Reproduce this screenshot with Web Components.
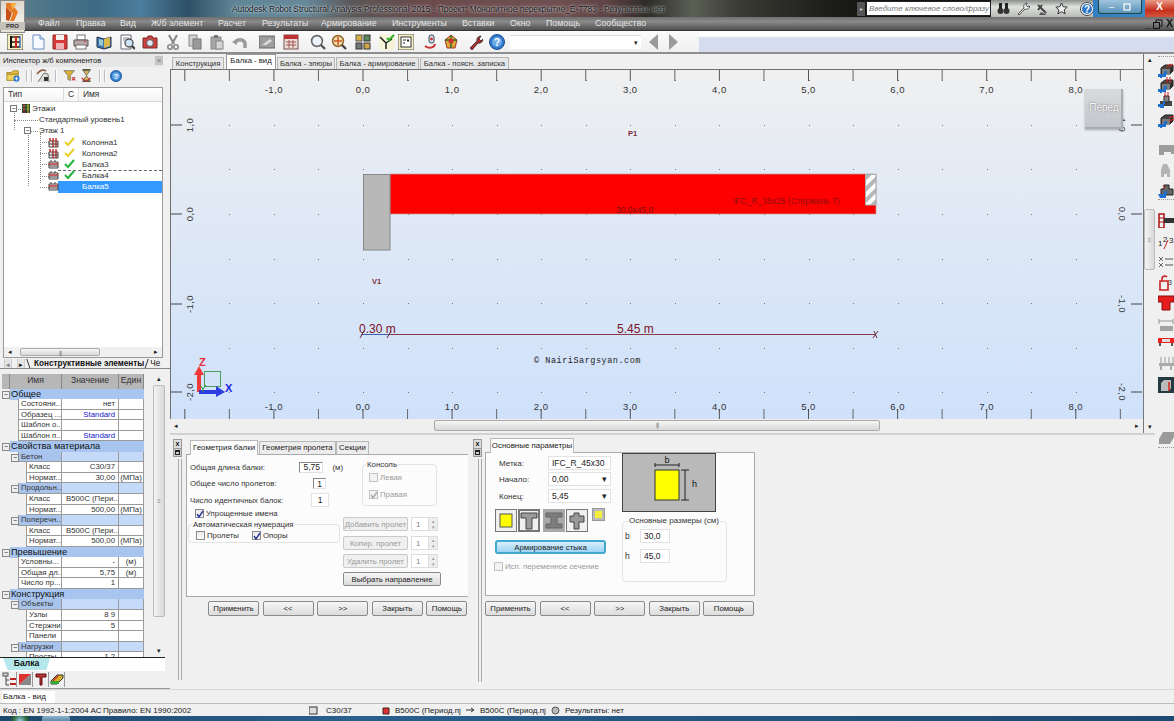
<!DOCTYPE html>
<html lang="ru"><head><meta charset="utf-8"><title>Robot</title>
<style>
html,body{margin:0;padding:0;background:#f0f0f0;overflow:hidden}
body{font:8px "Liberation Sans",Arial,sans-serif;color:#222;width:1174px;height:721px}
</style></head><body>
<rb-app></rb-app>
<script>
const S=(body,w=16,h=16)=>`<svg width="${w}" height="${h}" viewBox="0 0 ${w} ${h}" xmlns="http://www.w3.org/2000/svg">${body}</svg>`;
function def(name,css,html){
  customElements.define(name,class extends HTMLElement{
    constructor(){super();const r=this.attachShadow({mode:'open'});r.innerHTML=`<style>${css}</style>`+(typeof html==='function'?html(this):html);}
  });
}
const I={
 tree:`<rect x="0" y="0" width="16" height="16" fill="#f5eec0" stroke="#444"/><path d="M3 3h10M3 8h10M3 13h10" stroke="#222" stroke-width="1.6"/><path d="M4 2v12" stroke="#111" stroke-width="2"/><path d="M9 2v12" stroke="#c22" stroke-width="2"/><path d="M13 2v12" stroke="#36c" stroke-width="1.4"/>`,
 doc:`<path d="M3 1h7l4 4v10H3z" fill="#f6f9ff" stroke="#6c8fc0"/><path d="M10 1v4h4" fill="#cfe0f5" stroke="#6c8fc0"/>`,
 save:`<path d="M1 1h14v14H1z" fill="#d63a3a" stroke="#8d2a2a"/><rect x="4" y="1" width="8" height="5" fill="#f2f2f2"/><rect x="4" y="9" width="8" height="6" fill="#ecb4b4"/>`,
 print:`<rect x="4" y="1" width="8" height="5" fill="#fff" stroke="#777"/><path d="M1 6h14v6H1z" fill="#b8a6a6" stroke="#555"/><rect x="3" y="11" width="10" height="4" fill="#fff" stroke="#777"/><rect x="11" y="7" width="2" height="1" fill="#d33"/>`,
 book:`<path d="M1 3l7 2 7-2v10l-7 2-7-2z" fill="#3f74b8" stroke="#234"/><path d="M8 5l6-2v9l-6 2z" fill="#d9b84c"/><path d="M3 5l4 1v6l-4-1z" fill="#9cc"/>`,
 prev:`<path d="M2 1h10v14H2z" fill="#fff" stroke="#667"/><circle cx="10" cy="9" r="4" fill="#cfe3f7" stroke="#555" stroke-width="1.4"/><path d="M13 12l3 3" stroke="#333" stroke-width="2"/><path d="M4 4h6M4 6h3" stroke="#889"/>`,
 cam:`<path d="M1 4h4l1-2h4l1 2h4v10H1z" fill="#c9403f" stroke="#7a2a2a"/><circle cx="8" cy="9" r="3.4" fill="#dfe8f2" stroke="#555"/>`,
 cut:`<path d="M4 1l5 9M12 1L7 10" stroke="#8a8a8a" stroke-width="2.2"/><circle cx="5" cy="13" r="2.2" fill="none" stroke="#888" stroke-width="1.6"/><circle cx="11" cy="13" r="2.2" fill="none" stroke="#888" stroke-width="1.6"/>`,
 copy:`<rect x="2" y="1" width="8" height="11" fill="#cfcfcf" stroke="#8a8a8a"/><rect x="6" y="5" width="8" height="10" fill="#9a9a9a" stroke="#777"/>`,
 paste:`<rect x="2" y="3" width="10" height="12" fill="#a6a6a6" stroke="#8a8a8a"/><rect x="5" y="1" width="4" height="3" fill="#777"/><rect x="7" y="7" width="7" height="8" fill="#d4d4d4" stroke="#888"/>`,
 undo:`<path d="M3 9a5.5 5.5 0 0 1 10 0v5" fill="none" stroke="#9b9b9b" stroke-width="3.4"/><path d="M0 8l5-3v6z" fill="#9b9b9b"/>`,
 grey:`<rect x="0" y="2" width="16" height="12" fill="#9d9d9d" stroke="#666"/><path d="M3 11l8-6 2 2-6 4z" fill="#ddd"/>`,
 calc:`<rect x="1" y="1" width="14" height="14" fill="#e8e0d8" stroke="#7a4a4a"/><rect x="1" y="1" width="14" height="4" fill="#b33"/><path d="M3 8h10M3 11h10M6 6v8M10 6v8" stroke="#a55"/>`,
 mag:`<circle cx="7" cy="7" r="5.4" fill="#eef4fb" stroke="#666" stroke-width="1.6"/><path d="M11 11l4 4" stroke="#555" stroke-width="2.4"/>`,
 zoomo:`<circle cx="7" cy="7" r="5.4" fill="#f5e1b4" stroke="#9a6a2a" stroke-width="1.6"/><path d="M7 3v8M3 7h8" stroke="#d0551e" stroke-width="1.5"/><path d="M11 11l4 4" stroke="#444" stroke-width="2.4"/>`,
 multi:`<rect x="1" y="1" width="6" height="6" fill="#d8b040" stroke="#555"/><rect x="9" y="1" width="6" height="6" fill="#5a8a5a" stroke="#333"/><rect x="1" y="9" width="6" height="6" fill="#777" stroke="#333"/><rect x="9" y="9" width="6" height="6" fill="#d3a54a" stroke="#333"/>`,
 ygreen:`<rect x="0" y="0" width="16" height="16" fill="#f6f3d8"/><path d="M1 3l6 6v6M7 9l6-4" fill="none" stroke="#222" stroke-width="1.5"/><path d="M8 4l2 2 5-5" fill="none" stroke="#2bb32b" stroke-width="2"/>`,
 frame:`<rect x="0" y="0" width="16" height="16" fill="#f3eec4" stroke="#555"/><rect x="3" y="3" width="10" height="10" fill="#fff" stroke="#333"/><path d="M5 6h3M5 9h2" stroke="#222"/><path d="M10 5v3M9 6.5h2" stroke="#222"/>`,
 link:`<path d="M3 12c4 3 9 2 10-2" fill="none" stroke="#c33" stroke-width="2"/><rect x="7" y="1" width="5" height="8" rx="2" fill="#d8e4ef" stroke="#345"/><circle cx="9.5" cy="5" r="1.4" fill="#c33"/>`,
 color:`<path d="M8 1l6 5-2 8H4L2 6z" fill="#d9a932" stroke="#a33"/><path d="M8 1v13M2 6h12" stroke="#2a6a2a" stroke-width="1.4"/><circle cx="8" cy="7" r="2.5" fill="#c33"/>`,
 wrench:`<path d="M3 14l7-7a4 4 0 0 1 4-5l-2 3 2 2 2-2a4 4 0 0 1-5 4l-6 7z" fill="#b33030" stroke="#222" stroke-width=".8"/>`,
 help:`<circle cx="8" cy="8" r="7.5" fill="#2f78c8" stroke="#1d4f92"/><circle cx="8" cy="8" r="5" fill="#6aaae8"/><text x="8" y="11.5" text-anchor="middle" font-family="Liberation Sans" font-weight="bold" font-size="10" fill="#fff">?</text>`,
 folder:`<path d="M1 4h5l2-2h6v4H1z" fill="#e3c043" stroke="#a8862a"/><path d="M1 6h13v7H1z" fill="#f0d25a" stroke="#a8862a"/><circle cx="12" cy="11" r="3.5" fill="#2f7ad0"/><path d="M12 9v4M10 11h4" stroke="#fff"/>`,
 tool:`<path d="M3 14l6-9 4 1 1 8" fill="#ddd" stroke="#776"/><path d="M2 6c3-4 6-5 9-3" fill="none" stroke="#8a5a40" stroke-width="1.6"/><path d="M9 9h4v4H9z" fill="#333"/>`,
 funnel:`<path d="M1 2h13l-5 6v6l-3-1V8z" fill="#d9b030" stroke="#776"/><path d="M11 10l4 4M15 10l-4 4" stroke="#c33" stroke-width="1.5"/>`,
 hour:`<path d="M3 1h10M3 15h10" stroke="#554" stroke-width="2"/><path d="M4 2l4 6 4-6zM4 14l4-6 4 6z" fill="#d7b25a" stroke="#665"/><path d="M2 11l5 4M8 15l5-4" stroke="#b33" stroke-width="1.5"/>`,
};
const sized=(n,z)=>S(I[n],z,z).replace(`viewBox="0 0 ${z} ${z}"`,'viewBox="0 0 16 16"');
const cube=(extra)=>S(`<path d="M3 6l4-3h8v6l-3 3H3z" fill="#444" stroke="#222"/><path d="M4 7h8v5H4z" fill="#7c7c7c"/><path d="M12 7l3-3v5l-3 3z" fill="#2d2d2d"/>${extra}<path d="M0 12h6v-3h3v3h-1v3H4v1H2v-1H0z" fill="#1f6fd0"/>`,16,16);

def('rb-logo',`:host{position:absolute;left:0;top:0;width:25px;height:33px;background:linear-gradient(#dbd6cc,#f2efe8 65%,#e2dfd6);box-shadow:inset 0 0 0 1px #8a8a8a;z-index:5;display:block}
 svg{display:block;margin:3px 0 0 4px} b{display:block;font:bold 6px "Liberation Sans";text-align:center;color:#333;background:#c4c1b8;height:8px;line-height:8px;margin-top:1px}`,
 S(`<path d="M2 0h5l7 9-4 9H6l3-8-7-6z" fill="#e77a22"/><path d="M7 0h6L8 7z" fill="#f6b04a"/><path d="M2 4l6 6-3 8-3-1z" fill="#c84e15"/>`,16,18)+`<b>PRO</b>`);

def('rb-titlebar',`:host{display:flex;height:17px;align-items:center;background:linear-gradient(90deg,#5d7f8c 0,#3d6a84 8%,#4b7d9c 12%,#2e5066 16%,#5f8596 20%,#66899a 26%,#5a5656 30%,#6a4a4b 36%,#6f5050 48%,#5d4142 52%,#2d2c27 55%,#5b5f54 59%,#3a3b34 63%,#1f1f1c 70%,#141413 74%);position:relative}
 .t{margin-left:232px;font-size:8.3px;color:#10151a;text-shadow:0 0 2px rgba(255,255,255,.8),0 0 4px rgba(255,255,255,.6);white-space:nowrap;width:600px}
 .s{margin-left:auto;display:flex;align-items:center;height:17px}
 .arrow{width:8px;height:14px;background:#555;color:#ccc;font-size:6px;line-height:14px;margin-right:1px;text-align:center}
 .in{width:125px;height:15px;background:#fff;border:1px solid #222;box-sizing:border-box;font:italic 8px "Liberation Sans";color:#777;line-height:13px;padding-left:2px;white-space:nowrap;overflow:hidden}
 .ic{display:flex;align-items:center;width:102px;height:17px;background:linear-gradient(#8b8f8a,#dfe2df 40%,#b9bbb7);padding-left:6px;box-sizing:border-box;gap:6px}
 .ic svg{flex:none}
 .w{display:flex;width:81px;height:17px;background:linear-gradient(90deg,#2f7fc1,#3f8fc8);box-sizing:border-box;position:relative;align-items:center}
 .m{height:14px;display:flex;align-items:center;justify-content:center;gap:9px;background:linear-gradient(#9fc4dc,#5b93b8);border:1px solid #244;border-top:0;border-radius:0 0 3px 3px;margin-left:5px;box-sizing:border-box;width:44px;color:#fff;font-size:9px;align-self:flex-start}
 .x{flex:1;align-self:stretch;margin-left:3px;background:linear-gradient(#e99a86,#c42f1c 60%,#d5543a);color:#fff;text-align:center;font:bold 10px/14px "Liberation Sans"}`,
 `<span class="t">Autodesk Robot Structural Analysis Professional 2015 - Проект: Монолитное перекрытие_E-7783 - Результаты: нет</span>
 <div class="s"><span class="arrow">▸</span><span class="in">Введите ключевое слово/фразу</span>
 <div class="ic">${S('<circle cx="3.5" cy="9" r="3" fill="#333"/><circle cx="9.5" cy="9" r="3" fill="#333"/><rect x="2" y="1" width="3" height="6" fill="#222"/><rect x="8" y="1" width="3" height="6" fill="#222"/>',13,13)}${S('<path d="M2 12l6-6a3.5 3.5 0 0 1 3-5l-1 2 2 2 2-1a3.5 3.5 0 0 1-5 3l-6 6z" fill="#eee" stroke="#333" stroke-width=".8"/>',14,13)}${S('<path d="M2 3l8 8M2 8l4-5" stroke="#444" stroke-width="2"/><path d="M5 10l6 3H3z" fill="#555"/>',13,13)}${S('<path d="M6.5 1l1.7 3.7 4 .4-3 2.7.9 4-3.6-2.1-3.6 2.1.9-4-3-2.7 4-.4z" fill="#eee" stroke="#333"/>',13,13)}<span style="width:9px"></span>${S('<circle cx="7" cy="7" r="6.5" fill="#fff" stroke="#444"/><circle cx="7" cy="7" r="5" fill="#2f78c8"/><text x="7" y="10.5" text-anchor="middle" font-family="Liberation Sans" font-weight="bold" font-size="10" fill="#fff">?</text>',14,14)}<span style="font-size:7px;color:#333;margin-left:-2px">▾</span></div>
 <div class="w"><div class="m"><span>–</span>${S('<rect x="1" y="1" width="6" height="6" fill="none" stroke="#fff" stroke-width="1.2"/>',8,8)}</div><div class="x">X</div></div></div>`);

def('rb-menubar',`:host{display:block;height:14px;background:linear-gradient(#6f6f6f,#8a8a8a 35%,#4f4f4f);border-bottom:1px solid #333;box-sizing:border-box;font-size:8.8px;line-height:13px;color:#e6e6e6;position:relative;white-space:nowrap}
 .m{position:absolute;top:0} .r{position:absolute;right:1px;top:0;display:flex;align-items:center;gap:3px;font:bold 10px/13px "Liberation Sans";color:#111;height:13px}`,
 ()=>{const m=[['Файл',38],['Правка',76],['Вид',120],['Ж/б элемент',151],['Расчет',218],['Результаты',262],['Армирование',321],['Инструменты',392],['Вставки',462],['Окно',510],['Помощь',546],['Сообщество',595]];
  return m.map(([t,x])=>`<span class="m" style="left:${x}px">${t}</span>`).join('')+`<div class="r"><span>_</span>${S('<rect x="0.5" y="3.5" width="6" height="6" fill="none" stroke="#111"/><path d="M3 3V1h6v6H7" fill="none" stroke="#111"/>',10,10)}<span>X</span></div>`});

def('rb-toolbar',`:host{display:flex;height:23px;align-items:center;background:linear-gradient(#fbfbfb,#efefef);border-bottom:2px solid #8e8e8e;box-sizing:border-box;position:relative}
 .ic{display:flex;align-items:center;flex:none;margin-left:7px}
 .ic span{display:block;width:16px;height:16px;flex:none} svg{display:block}
 .combo{margin-left:5px;width:131px;height:14px;background:#fff;border-top:1px solid #ddd;position:relative;flex:none;box-sizing:border-box;font-size:7px;text-align:right;padding-right:3px;line-height:14px}
 .n{flex:none;margin-left:8px;display:flex;gap:11px;align-items:center;width:40px}
 .fill{flex:1;align-self:stretch;margin:1px 0 0 10px;background:linear-gradient(#fff 0,#fff 4px,#d5dcee 6px)}`,
 ()=>{const names=['tree','doc','save','print','book','prev','cam','cut','copy','paste','undo','grey','calc','mag','zoomo','multi','ygreen','frame','link','color','wrench','help'];
  const xs=[15,38,60,81,104,127,150,173,195,217,240,267,291,318,339,363,387,406,430,451,475,497];
  return `<div class="ic">`+names.map((n,i)=>{const mx=i?xs[i]-xs[i-1]-16:0;return `<span style="margin-left:${mx}px">${S(I[n])}</span>`}).join('')+`</div><div class="combo">▾</div><div class="n">${S('<path d="M9 0v16L0 8z" fill="#9a9a9a"/>',9,16)}${S('<path d="M0 0v16l9-8z" fill="#9a9a9a"/>',9,16)}</div><div class="fill"></div>`});

def('rb-vbar',`:host{display:flex;flex-direction:column;background:#f0f0f0;box-sizing:border-box;width:var(--w,12px)}
 .a{height:12px;font-size:7px;line-height:12px;text-align:center;color:#222;flex:none} .t{background:linear-gradient(90deg,#f4f4f4,#d9d9d9);border:1px solid #bbb;border-radius:2px;box-sizing:border-box;flex:none;text-align:center;color:#888;font-size:6px;display:flex;align-items:center;justify-content:center} .s{flex:none}`,
 el=>`<div class="a">▴</div><div class="s" style="height:${el.getAttribute('before')||0}px"></div><div class="t" style="height:${el.getAttribute('thumb')||40}px">≡</div><div style="flex:1"></div><div class="a">▾</div>`);
def('rb-hbar',`:host{display:flex;align-items:center;background:#f0f0f0;height:var(--h,12px);flex:none}
 .a{width:12px;font-size:7px;text-align:center;flex:none;color:#222} .t{height:calc(100% - 2px);background:linear-gradient(#f6f6f6,#d8d8d8);border:1px solid #aaa;border-radius:2px;box-sizing:border-box;text-align:center;color:#777;font-size:7px;line-height:9px;flex:none} `,
 el=>`<div class="a">◂</div><div style="width:${el.getAttribute('before')||0}px;flex:none"></div><div class="t" style="width:${el.getAttribute('thumb')||40}px">⦀</div><div style="flex:1"></div><div class="a">▸</div>`);

def('rb-tree',`:host{display:block;background:#fff;margin:3px 7px 0 3px;height:260px;border:1px solid #9a9a9a;border-bottom:0;box-sizing:border-box;overflow:hidden;position:relative;font-size:8px;letter-spacing:-.05px}
 .h{display:flex;height:13px;border-bottom:1px solid #d5d5d5;background:linear-gradient(#fff,#f4f4f4);line-height:12px;margin-bottom:1px;color:#333;font-size:8.5px}
 .h span{border-right:1px solid #ddd;box-sizing:border-box;padding-left:4px;flex:none}
 .r{height:11.2px;display:flex;align-items:center;position:relative;white-space:nowrap;line-height:11px;color:#333}
 .b{position:absolute;width:7px;height:7px;border:1px solid #777;background:#fff;box-sizing:border-box;font-size:7px;line-height:5px;text-align:center;top:2px;color:#222}
 .d{position:absolute;height:0;top:5.5px;border-top:1px dotted #888}
 .v{position:absolute;width:0;border-left:1px dotted #888}
 .l{position:absolute} .ic{position:absolute;top:0}
 .sel{position:absolute;left:54px;right:0;top:0;bottom:0;background:#3399ff}
 .foc{position:absolute;left:54px;right:0;top:0;bottom:0;border-top:1px dashed #666;box-sizing:border-box}`,
 ()=>{
  const redI=S('<path d="M1 4h9v6H1z" fill="#e8e8e8" stroke="#444"/><path d="M5 1v9M8 1v9M2 4V1" stroke="#b22" stroke-width="1.4"/><path d="M1 7h9" stroke="#444"/>',11,11);
  const beamI=S('<path d="M1 3h9v6H1z" fill="#eee" stroke="#444"/><path d="M1 5h9" stroke="#b22" stroke-width="1.4"/><path d="M3 3V1M7 3V1" stroke="#444"/><path d="M1 7h9" stroke="#444"/>',11,11);
  const ck=c=>S(`<path d="M1 5l3 3 6-7" fill="none" stroke="${c}" stroke-width="2"/>`,11,10);
  const rows=[
   `<span class="d" style="left:9px;width:10px"></span><span class="b" style="left:6px">−</span><span class="ic" style="left:17px">${S('<rect x="1" y="1" width="8" height="9" fill="#333"/><path d="M1 3h8M1 6h8" stroke="#3a3"/><path d="M3 1v9" stroke="#c33"/><path d="M7 1v9" stroke="#dc3"/>',10,11)}</span><span class="l" style="left:28px">Этажи</span>`,
   `<span class="d" style="left:10px;width:24px"></span><span class="l" style="left:35px">Стандартный уровень1</span>`,
   `<span class="d" style="left:24px;width:10px"></span><span class="b" style="left:20px">−</span><span class="l" style="left:35px">Этаж 1</span>`,
   ...[['Колонна1',redI,'#e6cf2a'],['Колонна2',redI,'#e6cf2a'],['Балка3',beamI,'#22b53a'],['Балка4',beamI,'#22b53a'],['Балка5',beamI,null]].map(([t,ic,c],i)=>
    `${i==3?'<span class="foc"></span>':''}${i==4?'<span class="sel"></span>':''}<span class="d" style="left:36px;width:9px"></span><span class="ic" style="left:44px">${ic}</span>${c?`<span class="ic" style="left:60px">${ck(c)}</span>`:''}<span class="l" style="left:78px;${i==4?'color:#fff':''}">${t}</span>`)
  ];
  return `<div class="h"><span style="width:60px">Тип</span><span style="width:15px">С</span><span style="flex:1;border:0">Имя</span></div><div style="position:relative"><span class="v" style="left:10px;top:5px;height:22px"></span><span class="v" style="left:24px;top:27px;height:56px"></span><span class="v" style="left:36px;top:30px;height:50px"></span>`+rows.map(r=>`<div class="r">${r}</div>`).join('')+`</div>`;
 });

def('rb-sheet-tabs',`:host{display:flex;height:15px;align-items:center;margin-top:1px;padding-left:4px;background:#f0f0f0;overflow:hidden;position:relative;border-bottom:1px solid #888;box-sizing:border-box;white-space:nowrap}
 .b{width:8px;height:12px;font-size:7px;line-height:12px;text-align:center;background:#e3e3e3;border:1px solid #ccc;box-sizing:border-box;margin-right:5px;flex:none;color:#777}
 .t{font:bold 8.2px "Liberation Sans";margin-left:3px;flex:none;color:#111} svg{flex:none;display:block}`,
 `<span class="b">◂</span><span class="b" style="color:#111;margin-right:1px">▸</span>${S('<path d="M0 0l5 14" stroke="#333" fill="none"/>',5,14)}<span class="t">Конструктивные элементы</span>${S('<path d="M5 0L0 14" stroke="#333" fill="none"/>',5,14)}<span class="t" style="margin-left:1px;font-weight:normal">Че</span>`);

def('rb-props',`:host{display:flex;height:284px;flex:none;overflow:hidden;margin-top:4px;background:#f0f0f0;padding-left:2px;box-sizing:border-box}
 .g{width:142px;flex:none;overflow:hidden;height:284px}
 .hd{display:grid;grid-template-columns:8px 52px 57px 25px;height:14.5px;line-height:13px;text-align:center;font-size:8.6px;color:#333;margin-top:1px}
 .hd span{background:#b7b7b7;border-right:1px solid #888;box-sizing:border-box;overflow:hidden}
 .rw{display:grid;grid-template-columns:8px 52px 57px 25px;height:10.55px;position:relative;line-height:10px;font-size:7.8px;color:#333;white-space:nowrap}
 .rw>span{box-sizing:border-box;border-bottom:1px solid #9b9b9b;border-right:1px solid #9b9b9b;background:#fff;overflow:hidden;padding:0 1px}
 .tg{background:transparent!important;border:0!important;padding:0!important;position:relative;overflow:visible!important}
 .tg i{position:absolute;left:0;top:2px;width:6px;height:6px;border:1px solid #888;background:#eee;font:normal 7px/5px "Liberation Sans";text-align:center;color:#222}
 .rw .num{text-align:right;padding-right:3px} .rw .blue{color:#1414c8}
 .rw.g0>span:not(.tg){background:#a7c5ef;border-color:#a7c5ef;color:#111;font-size:9.2px;overflow:visible}
 .rw.g0 .n{grid-column:2 / 5}
 .rw.s>span:not(.tg){background:#c5d9f8}
 .rw.s>.n{background:#a9c4ec!important}
 .rw .n{padding:0 0 0 1px}
 .rw.i1 .n,.rw.s .n{margin-left:8px;border-left:1px solid #9b9b9b;padding:0 0 0 2px}
 .rw.i2 .n{margin-left:16px;border-left:1px solid #9b9b9b;padding:0 0 0 2px}
 .rw.s i{left:9px}
 rb-vbar{width:12px;margin-left:9px;height:284px}`,
 ()=>{
  const d=[['g','Общее'],['i','Состояни...','нет'],['i','Образец ...','Standard','',1],['i','Шаблон о...'],['i','Шаблон п...','Standard','',1],
  ['g','Свойства материала'],['s','Бетон'],['j','Класс','C30/37'],['j','Нормат...','30,00','(МПа)'],['s','Продольн...'],['j','Класс','B500C (Пери...'],['j','Нормат...','500,00','(МПа)'],['s','Поперечн...'],['j','Класс','B500C (Пери...'],['j','Нормат...','500,00','(МПа)'],
  ['g','Превышение'],['i','Условны...','-','(м)'],['i','Общая дл...','5,75','(м)'],['i','Число пр...','1'],
  ['g','Конструкция'],['s','Объекты'],['j','Узлы','8 9'],['j','Стержни','5'],['j','Панели'],['s','Нагрузки'],['j','Просты...','1 2']];
  const h=d.map(([k,n,v='',u='',b])=>{
    if(k=='g')return `<div class="rw g0"><span class="tg"><i>−</i></span><span class="n">${n}</span></div>`;
    if(k=='s')return `<div class="rw s"><span class="tg"><i>−</i></span><span class="n">${n}</span><span></span><span></span></div>`;
    const c=k=='i'?'i1':'i2';
    return `<div class="rw ${c}"><span class="tg"></span><span class="n">${n}</span><span class="num ${b?'blue':''}" ${v.startsWith('B500')?'style="text-align:left;padding-left:4px"':''}>${v}</span><span style="text-align:center">${u}</span></div>`}).join('');
  return `<div class="g"><div class="hd"><span></span><span>Имя</span><span>Значение</span><span>Един</span></div>${h}</div><rb-vbar before="0" thumb="232"></rb-vbar>`;
 });

def('rb-bottomtabs',`:host{display:block;height:32px;flex:none;position:relative;border-bottom:1px solid #999;box-sizing:border-box}
 .row{display:flex;height:14px;background:#fff;border-top:1px solid #222;margin-right:5px;box-sizing:border-box;align-items:flex-start}
 .t{width:47px;height:12px;margin-left:3px;background:#b5e8ea;clip-path:polygon(0 0,100% 0,92% 100%,10% 100%);font:bold 8.6px/11px "Liberation Sans";text-align:center;color:#111}
 .ic{display:flex;gap:0;margin:1px 0 0 2px} .ic span{width:14px;height:15px;border-right:1px solid #999;margin-right:1px;display:block;background:#f0f0f0}`,
 `<div class="row"><div class="t">Балка</div></div><div class="ic"><span>${S('<rect x="1" y="1" width="5" height="3" fill="#d8d8d8" stroke="#555"/><path d="M4 4v9h3M4 8h3" stroke="#444" fill="none"/><path d="M8 7h6M8 12h6" stroke="#b22" stroke-width="2"/>',14,15)}</span><span>${S('<path d="M1 2h12L1 13z" fill="#d33"/><path d="M13 2v11H1z" fill="#888"/>',14,15)}</span><span>${S('<path d="M2 2h10v3H8v8H6V5H2z" fill="#b33" stroke="#611"/>',14,15)}</span><span>${S('<path d="M1 9l6-6h6v3l-6 6H1z" fill="#d7b025" stroke="#333"/><path d="M1 9h8v3H1z" fill="#3a3"/><path d="M3 9l5-5" stroke="#c33" stroke-width="1.5"/>',14,15)}</span></div>`);

def('rb-inspector',`:host{display:flex;flex-direction:column;width:170px;flex:none;background:#f0f0f0;height:635px;overflow:hidden}
 .title{height:13px;flex:none;background:#e6e6e6;margin-right:7px;font-size:7.6px;line-height:13px;padding-left:3px;color:#222;position:relative;white-space:nowrap}
 .title b{position:absolute;right:0;top:2px;width:8px;height:9px;background:#c5c5c5;color:#777;font:8px/9px "Liberation Sans";text-align:center}
 .tb{height:17px;flex:none;display:flex;align-items:center;padding-left:6px;margin-right:7px}
 .tb svg{display:block;flex:none} .tb span{display:block;flex:none} .sep{width:1px;height:12px;background:#bbb;flex:none;box-shadow:1px 0 #fff}
 rb-tree{flex:none}
 rb-hbar{--h:10px;margin:0 7px 0 3px;border:1px solid #9a9a9a;border-top:0}`,
 `<div class="title">Инспектор ж/б компонентов<b>×</b></div>
  <div class="tb">${sized('folder',14)}<span class="sep" style="margin-left:6px"></span><span class="sep" style="margin-left:4px"></span><span style="margin-left:3px">${S(I.tool)}</span><span class="sep" style="margin-left:4px"></span><span style="margin-left:7px">${sized('funnel',13)}</span><span style="margin-left:4px">${sized('hour',13)}</span><span class="sep" style="margin-left:6px"></span><span class="sep" style="margin-left:4px"></span><span style="margin-left:5px">${sized('help',12)}</span></div>
  <rb-tree></rb-tree><rb-hbar before="4" thumb="80"></rb-hbar><rb-sheet-tabs></rb-sheet-tabs><rb-props></rb-props><rb-bottomtabs></rb-bottomtabs>`);

def('rb-canvas',`:host{display:block;width:972px;height:349px;background:linear-gradient(#f0f0f0,#e4ebf4 28%,#cfe1fb);border-left:1px solid #707070;border-top:1px solid #707070;box-sizing:content-box;overflow:hidden;flex:none;position:relative}
 svg{display:block} text{font-family:"Liberation Sans",Arial,sans-serif}
 .p{position:absolute;left:914px;top:19px;width:38px;height:40px;background:linear-gradient(#d8dade,#c2c5c9);box-shadow:inset -2px -2px 0 #a9adb2,0 1px 2px rgba(90,100,110,.5);font:10px/38px "Liberation Sans";color:#f6f6f6;text-align:center;text-shadow:0 0 2px #666}`,
 ()=>{
  let s='';
  const ux=89.1,x0=363;
  for(let k=-2;k<=8;k++){const x=x0+k*ux;
    s+=`<path d="M${x} 70v11M${x} 409v11" stroke="#555"/>`;
    const h=x+ux/2;if(h<1142&&h>171)s+=`<path d="M${h} 70v11M${h} 409v11" stroke="#666"/>`;
    if(k>=-1)s+=`<text x="${x}" y="93" text-anchor="middle" font-size="9.5" letter-spacing=".5" fill="#333">${k.toFixed(1).replace('.',',')}</text><text x="${x}" y="410" text-anchor="middle" font-size="9.5" letter-spacing=".5" fill="#333">${k.toFixed(1).replace('.',',')}</text>`;
  }
  const ys=[[125,'1,0'],[214,'0,0'],[304,'-1,0'],[392,'-2,0']];
  for(const [y,t] of ys){s+=`<path d="M171 ${y}h11M1131 ${y}h11" stroke="#444"/><text transform="translate(193 ${y}) rotate(-90)" text-anchor="middle" font-size="9.5" letter-spacing=".4" fill="#333">${t}</text><text transform="translate(1119 ${y}) rotate(90)" text-anchor="middle" font-size="9.5" letter-spacing=".4" fill="#333">${t}</text>`}
  for(const y of [80,125,169,214,259,303,348,392])for(let k=-3;k<=16;k++){const x=x0+k*44.55;if(x<185||x>1120)continue;s+=`<rect x="${Math.round(x)}" y="${y}" width="1" height="1" fill="#777"/>`}
  s+=`<defs><pattern id="hh" width="8" height="8" patternUnits="userSpaceOnUse" patternTransform="rotate(45)"><rect width="8" height="8" fill="#fff"/><rect width="4" height="8" fill="#b4b8bb"/></pattern></defs>`;
  s+=`<rect x="390" y="174" width="486" height="40" fill="#ff0000" stroke="#b9a0a0" stroke-width=".7"/>`;
  s+=`<rect x="865.5" y="174.5" width="10.5" height="30.5" fill="url(#hh)" stroke="#aaa"/>`;
  s+=`<rect x="363.5" y="174.5" width="26.5" height="75.5" fill="#b8b8b8" stroke="#888"/>`;
  s+=`<text x="616" y="213" font-size="8.5" fill="#7a1010">30,0x45,0</text><text x="733" y="204" font-size="8.5" fill="#8a1010">IFC_R_35x25 (Стержень 7)</text>`;
  s+=`<text x="628" y="136" font-size="7.5" font-weight="bold" fill="#7a2d3a">P1</text><text x="372" y="284" font-size="7.5" font-weight="bold" fill="#7a2d3a">V1</text>`;
  s+=`<path d="M361 334.5h29" stroke="#3a5fb0"/><path d="M390 334.5h486" stroke="#8a3a44"/><path d="M360 338l4-7M387 338l4-7M873 338l5-7M874 331l3 7" stroke="#6a2a3a"/>`;
  s+=`<text x="359" y="333" font-size="12" fill="#7a1428">0.30 m</text><text x="617" y="333" font-size="12" fill="#7a1428">5.45 m</text>`;
  s+=`<text x="534" y="363" font-size="8.5" style="font-family:'Liberation Mono'" letter-spacing=".53" fill="#222">© NairiSargsyan.com</text>`;
  s+=`<rect x="204.5" y="371.5" width="16" height="15" fill="none" stroke="#4e9e5e"/><path d="M199 392v-20" stroke="#f03a3a" stroke-width="4"/><path d="M194 375l5-9 5 9z" fill="#f03a3a"/><path d="M199 392h20" stroke="#2c3ce0" stroke-width="4"/><path d="M216 386l9 6-9 5z" fill="#2c3ce0"/><path d="M200 385l3 4 3-4M203 389v3" stroke="#2a9a3a" fill="none"/>`;
  s+=`<text x="199" y="366" font-size="11" font-weight="bold" fill="#e82a3a">Z</text><text x="225" y="392" font-size="11" font-weight="bold" fill="#2020e0">X</text>`;
  return `<svg width="972" height="349" viewBox="171 70 972 349">${s}</svg><div class="p">Перед</div>`;
 });

def('rb-top-tabs',`:host{display:flex;height:15px;align-items:flex-end;padding-left:2px;background:#f0f0f0;flex:none;font-size:7.7px;color:#333;white-space:nowrap}
 span{height:12px;line-height:11px;border:1px solid #b5b5b5;border-bottom:0;margin-right:1px;background:#e7e7e7;box-sizing:border-box;flex:none;text-align:center}
 .a{height:15px;line-height:12px;background:#fff;border-color:#9a9a9a;margin:0 1px 0 1px;color:#222}`,
 `<span style="width:52px">Конструкция</span><span class="a" style="width:50px">Балка - вид</span><span style="width:58px">Балка - эпюры</span><span style="width:83px">Балка - армирование</span><span style="width:89px">Балка - поясн. записка</span>`);

def('rb-btn',`:host{display:inline-flex;align-items:center;justify-content:center;height:15px;width:51px;box-sizing:border-box;border:1px solid #8a8a8a;border-radius:2px;background:linear-gradient(#f6f6f6,#dcdcdc);font-size:7.8px;color:#222;white-space:nowrap;flex:none;overflow:hidden}
 :host([off]){color:#9a9a9a;border-color:#c9c9c9;background:#f0f0f0}
 :host([act]){border:2px solid #41a8cf;background:linear-gradient(#d7effc,#9ed4f3);border-radius:3px}`,`<slot></slot>`);
def('rb-check',`:host{display:inline-flex;align-items:center;gap:2px;font-size:7.8px;color:#333;white-space:nowrap;height:11px;line-height:11px}
 i{display:block;width:9px;height:9px;border:1px solid #8a8a8a;background:linear-gradient(#e8e8e8,#fff);box-sizing:border-box;position:relative;flex:none}
 :host([off]){color:#9a9a9a} :host([off]) i{border-color:#c2c2c2;background:#f2f2f2}
 svg{position:absolute;left:0;top:0}`,el=>`<i>${el.hasAttribute('on')?`<svg width="8" height="8" viewBox="0 0 8 8"><path d="M1 4l2 3 4-6" fill="none" stroke="${el.hasAttribute('off')?'#aaa':'#2a3a9a'}" stroke-width="1.5"/></svg>`:''}</i><slot></slot>`);
def('rb-input',`:host{display:inline-flex;align-items:center;box-sizing:border-box;background:#fff;border:1px solid #e2e2e2;font-size:8.5px;color:#222;padding:0 3px;white-space:nowrap;flex:none;overflow:hidden;justify-content:space-between}
 :host([dark]){border-top-color:#888;border-left-color:#888} :host([sel])::after{content:"▾";font-size:9px;color:#222}`,`<slot></slot>`);
def('rb-spin',`:host{display:inline-flex;width:27px;height:14px;box-sizing:border-box;border:1px solid #ddd;background:#fff;color:#888;font-size:8px;align-items:center;padding-left:4px;margin-left:3px;flex:none;position:relative;justify-content:space-between}
 div{width:8px;height:12px;background:#eee;border-left:1px solid #ddd;font-size:5px;line-height:6px;text-align:center;color:#999}`,`<slot></slot><div>▴<br>▾</div>`);
def('rb-grip',`:host{display:block;width:var(--g,13px);flex:none;position:relative;align-self:stretch}
 .x{position:absolute;left:0;top:4px;width:7px;height:8px;border:1px solid #999;background:#ddd;font:bold 7px/7px "Liberation Sans";text-align:center;color:#111}
 .m{position:absolute;left:0;top:13px;width:7px;height:7px;border:1px solid #999;background:#ccc;box-sizing:content-box}
 .m::after{content:"";position:absolute;left:1px;top:1px;right:1px;bottom:1px;border:1px solid #222;border-top-width:2px}
 .l{position:absolute;left:5px;top:24px;bottom:4px;width:2px;border-left:1px solid #aaa;border-right:1px solid #aaa}`,`<div class="x">x</div><div class="m"></div><div class="l"></div>`);
def('rb-dlg-tabs',`:host{display:flex;height:14px;flex:none;font-size:7.9px;color:#222;white-space:nowrap;position:relative;z-index:1}
 ::slotted(span){display:block;box-sizing:border-box;height:13px;margin-top:1px;background:#ececec;border:1px solid #b8b8b8;border-bottom:0;line-height:11px;text-align:center;flex:none}
 ::slotted(span.a){background:#fcfcfc;height:15px;margin-top:0;line-height:13px;margin-right:1px}`,`<slot></slot>`);
def('rb-buttons',`:host{display:flex;gap:3.6px;flex:none;height:15px;margin-top:4px}`,`<slot></slot>`);

def('rb-geom',`:host{display:block;width:300px;flex:none;padding-top:5px;box-sizing:border-box;height:100%}
 .wrap{display:flex;height:100%} .col{width:282px;flex:none;overflow:hidden}
 .box{height:143px;background:#fcfcfc;border:1px solid #aaa;border-right:0;box-sizing:border-box;display:grid;grid-template-columns:153px 110px;padding:4px 0 0 3px}
 .rw{display:flex;align-items:center;white-space:nowrap;font-size:7.8px;color:#333;flex:none}
 .left{display:flex;flex-direction:column}
 fieldset{border:1px solid #e4e4e4;border-radius:4px;margin:0;padding:0;font-size:7.8px;color:#333;box-sizing:border-box}
 legend{padding:0 1px;margin-left:3px;line-height:11px}
 .kons{margin-left:19px;width:75px;height:47px;display:block}
 .kons rb-check{display:flex;margin:2px 0 0 6px} .kons rb-check+rb-check{margin-top:6px}
 .num{margin-left:-2px;width:152px;height:24px}
 .right{display:flex;flex-direction:column}
 .right .rw{height:14px}`,
 `<div class="wrap"><rb-grip style="--g:13px;top:-5px"></rb-grip><div class="col">
 <rb-dlg-tabs><span class="a" style="width:68px;margin-left:4px">Геометрия балки</span><span style="width:77px">Геометрия пролета</span><span style="width:33px">Секции</span></rb-dlg-tabs>
 <div class="box"><div class="left">
   <div class="rw" style="height:16px"><span style="width:115px">Общая длина балки:</span><rb-input dark style="width:24px;height:11px">5,75</rb-input><span style="margin-left:9px">(м)</span></div>
   <div class="rw" style="height:17px"><span style="width:123px">Общее число пролетов:</span><rb-input dark style="width:13px;height:11px;justify-content:flex-end">1</rb-input></div>
   <div class="rw" style="height:16px"><span style="width:121px">Число идентичных балок:</span><rb-input style="width:18px;height:14px;justify-content:center">1</rb-input></div>
   <div class="rw" style="height:11px;padding-left:5px"><rb-check on>Упрощенные имена</rb-check></div>
   <fieldset class="num"><legend>Автоматическая нумерация</legend><div style="display:flex;padding-left:7px"><rb-check style="width:56px">Пролеты</rb-check><rb-check on>Опоры</rb-check></div></fieldset>
 </div><div class="right">
   <fieldset class="kons"><legend>Консоль</legend><rb-check off>Левая</rb-check><rb-check off on>Правая</rb-check></fieldset>
   <div class="rw" style="margin-top:11px"><rb-btn off style="width:65px;height:14px">Добавить пролет</rb-btn><rb-spin>1</rb-spin></div>
   <div class="rw" style="margin-top:5px"><rb-btn off style="width:65px;height:14px">Копир. пролет</rb-btn><rb-spin>1</rb-spin></div>
   <div class="rw" style="margin-top:4px"><rb-btn off style="width:65px;height:14px">Удалить пролет</rb-btn><rb-spin>1</rb-spin></div>
   <div class="rw" style="margin-top:4px"><rb-btn style="width:98px;height:14px">Выбрать направление</rb-btn></div>
 </div></div>
 <rb-buttons style="margin-left:22px"><rb-btn>Применить</rb-btn><rb-btn>&lt;&lt;</rb-btn><rb-btn>&gt;&gt;</rb-btn><rb-btn>Закрыть</rb-btn><rb-btn style="width:41px">Помощь</rb-btn></rb-buttons>
 </div></div>`);

def('rb-section',`:host{display:block;width:283px;flex:none;padding-top:3px;box-sizing:border-box;height:100%}
 .wrap{display:flex;height:100%} .col{width:270px;flex:none}
 .box{height:144px;background:#fcfcfc;border:1px solid #aaa;box-sizing:border-box;display:grid;grid-template-columns:136px 133px}
 .left{padding:3px 0 0 9px;display:flex;flex-direction:column}
 .rw{display:flex;align-items:center;font-size:8px;color:#333;white-space:nowrap}
 .shape{display:flex;align-items:flex-start;margin-top:6px;gap:1px}
 .shape span{width:22px;height:23px;display:block;box-sizing:border-box;border:1px solid #777;background:#f0f0f0}
 .shape svg{display:block}
 fieldset{border:1px solid #e4e4e4;border-radius:4px;margin:3px 0 0 0;padding:0 0 0 2px;font-size:8px;color:#333;width:105px;height:67px;box-sizing:border-box}
 legend{margin-left:3px;padding:0 1px;line-height:12px}
 .rw2{display:flex;align-items:center;height:14px;margin-top:2px;font-size:8.5px}`,
 `<div class="wrap"><rb-grip style="--g:12px;top:-3px"></rb-grip><div class="col">
 <rb-dlg-tabs><span class="a" style="width:84px;margin-left:5px">Основные параметры</span></rb-dlg-tabs>
 <div class="box"><div class="left">
  <div class="rw" style="height:14px"><span style="width:53px;padding-left:4px;box-sizing:border-box">Метка:</span><rb-input style="width:63px;height:14px">IFC_R_45x30</rb-input></div>
  <div class="rw" style="height:14px;margin-top:2px"><span style="width:53px;padding-left:4px;box-sizing:border-box">Начало:</span><rb-input sel style="width:63px;height:14px">0,00</rb-input></div>
  <div class="rw" style="height:14px;margin-top:3px"><span style="width:53px;padding-left:4px;box-sizing:border-box">Конец:</span><rb-input sel style="width:63px;height:14px">5,45</rb-input></div>
  <div class="shape">
   <span>${S('<rect x="4" y="4" width="12" height="13" fill="#ffff00" stroke="#555"/>',20,21)}</span>
   <span style="border-width:2px">${S('<path d="M1 2h16v5h-5v11H6V7H1z" fill="#9a9a9a" stroke="#444"/>',18,19)}</span>
   <span style="background:#a8a8a8;border-color:#a8a8a8;margin-left:2px">${S('<path d="M2 3h16v4h-5v7h5v4H2v-4h5V7H2z" fill="#7d7d7d" stroke="#666"/>',20,21)}</span>
   <span>${S('<path d="M7 3h5v3h5v6h-5v7H7v-7H3V6h4z" fill="#999" stroke="#444"/>',20,21)}</span>
   <b style="display:block;width:13px;height:13px;background:#bbb;border:1px solid #999;box-sizing:border-box;margin:-1px 0 0 3px;padding:2px"><i style="display:block;height:100%;background:#f5ef3a"></i></b>
  </div>
  <rb-btn act style="width:111px;height:14px;margin-top:8px">Армирование стыка</rb-btn>
  <rb-check off style="margin:7px 0 0 -1px;display:flex">Исп. переменное сечение</rb-check>
 </div><div>
  <div style="width:94px;height:59px;background:#b9b9b9;border:1px solid #444;box-sizing:border-box">${S('<rect x="32" y="16" width="24" height="30" fill="#ffff00" stroke="#333"/><path d="M32 11h24M32 9v4M56 9v4M62 16v30M58 16h8M58 46h8" stroke="#222" fill="none"/><text x="44" y="9" text-anchor="middle" font-family="Liberation Sans" font-size="9" fill="#111">b</text><text x="69" y="33" font-family="Liberation Sans" font-size="9" fill="#111">h</text>',92,57)}</div>
  <fieldset><legend>Основные размеры (см)</legend>
   <div class="rw2"><span style="width:15px">b</span><rb-input style="width:30px;height:14px">30,0</rb-input></div>
   <div class="rw2" style="margin-top:6px"><span style="width:15px">h</span><rb-input style="width:30px;height:14px">45,0</rb-input></div>
  </fieldset>
 </div></div>
 <rb-buttons style="margin-top:5px"><rb-btn>Применить</rb-btn><rb-btn>&lt;&lt;</rb-btn><rb-btn>&gt;&gt;</rb-btn><rb-btn>Закрыть</rb-btn><rb-btn>Помощь</rb-btn></rb-buttons>
 </div></div>`);

def('rb-center',`:host{display:flex;flex-direction:column;flex:none;width:985px;height:635px;background:#f0f0f0}
 .top{display:flex;flex:none;height:379px}
 .c{display:flex;flex-direction:column;width:973px;flex:none}
 rb-hbar{--h:13px;background:#efefef}
 rb-vbar{flex:none;height:379px;border-left:1px solid #777;box-sizing:border-box}
 .d{display:flex;flex:1;padding-left:3px;border-top:2px solid #d2d2d2;box-sizing:border-box;height:256px}`,
 `<div class="top"><div class="c"><rb-top-tabs></rb-top-tabs><rb-canvas></rb-canvas><rb-hbar before="252" thumb="446"></rb-hbar></div><rb-vbar before="143" thumb="61"></rb-vbar></div><div class="d"><rb-geom></rb-geom><rb-section></rb-section></div>`);

def('rb-side',`:host{display:flex;flex-direction:column;width:19px;flex:none;background:#f0f0f0;height:635px;overflow:hidden;align-items:flex-start;padding-left:3px;box-sizing:border-box}
 span{display:block;flex:none;height:16px} svg{display:block} hr{border:0;border-top:1px dotted #999;width:16px;margin:0;flex:none;height:0}`,
 ()=>{
  const arr=[
   [56,'hr'],
   [62,cube('<path d="M8 5l5-3M11 5l4-3" stroke="#d22"/>')],
   [77,cube('<path d="M9 0v6M12 0v6" stroke="#d22"/>')],
   [92,S('<path d="M2 9h12v5H2z" fill="#444"/><path d="M6 4h5v6H6z" fill="#888" stroke="#222"/><path d="M7 0v5M10 0v5" stroke="#d22"/><path d="M0 12h5v-3h2v3H6v4H2v-1H0z" fill="#1f6fd0"/>')],
   [112,cube('<path d="M11 6l5-2M11 9l5-2" stroke="#d22"/>')],
   [142,S('<path d="M1 3h15v9h-3v-2H6v3H1z" fill="#9d9d9d"/>')],
   [162,S('<path d="M5 2h4l3 6v7H9v-3H6v3H3V8z" fill="#b4b4b4"/>')],
   [182,S('<path d="M3 7h3V3h5v4h4v6H3z" fill="#666" stroke="#222"/><path d="M0 12h6v-3h3v3H8v4H2z" fill="#1f6fd0"/><path d="M5 3l2 3" stroke="#d22"/>')],
   [199,'hr'],
   [212,S('<path d="M1 2h5v14H1z" fill="none" stroke="#a11" stroke-width="1.5"/><path d="M1 6h5M1 10h5" stroke="#a11"/><rect x="6" y="6" width="10" height="5" fill="#333"/>')],
   [235,S('<text x="0" y="11" font-family="Liberation Sans" font-size="8" fill="#222">1</text><text x="5" y="7" font-family="Liberation Sans" font-size="8" fill="#222">2</text><text x="11" y="8" font-family="Liberation Sans" font-size="8" fill="#222">3</text><path d="M6 14l4-9" stroke="#c22"/>')],
   [254,S('<path d="M1 3l4 4M5 3L1 7M1 9l4 4M5 9l-4 4" stroke="#666"/><path d="M7 5h8M7 11h8" stroke="#555"/>')],
   [275,S('<path d="M2 6h8v9H2zM4 6V3a3 3 0 0 1 5-1" fill="none" stroke="#c22" stroke-width="1.6"/><text x="10" y="10" font-family="Liberation Sans" font-size="7" fill="#333">3</text>')],
   [295,S('<path d="M0 1h16v6h-4v8H4V7H0z" fill="#e81c1c" stroke="#811"/>')],
   [317,S('<path d="M1 2v5M15 2v5M1 4h14" stroke="#999"/><rect x="2" y="9" width="13" height="5" fill="#a3a3a3"/>')],
   [335,S('<path d="M0 3h16v5H0z" fill="#e22"/><rect x="4" y="4" width="8" height="3" fill="#ddd"/><path d="M2 8v3M14 8v3" stroke="#555" stroke-width="2"/>')],
   [355,S('<path d="M3 2v6M7 2v6M11 2v6M15 2v6" stroke="#999"/><rect x="1" y="8" width="15" height="3" fill="#aaa"/><path d="M3 11v4M13 11v4" stroke="#aaa" stroke-width="2"/>')],
   [377,S('<rect x="0" y="0" width="16" height="16" fill="#223a40"/><path d="M3 6l3-3h7v8l-2 3H3z" fill="#bbb"/><path d="M11 5v9" stroke="#d22" stroke-width="1.5"/>')],
   [429,S('<path d="M1 10l4-7h11v5l-4 7H1z" fill="#9a9a9a"/>')],
   [447,'hr'],
  ];
  let y=54;
  return arr.map(([t,h])=>{const m=t-y;y=t+(h=='hr'?1:16);return h=='hr'?`<hr style="margin-top:${m}px">`:`<span style="margin-top:${m}px">${h}</span>`}).join('');
 });

def('rb-status',`:host{display:block;flex:none;font-size:8px;color:#222;background:#f0f0f0;white-space:nowrap}
 .a{height:14px;display:flex;align-items:center;border-top:1px solid #d8d8d8;box-sizing:border-box}
 .a span{background:#fff;width:53px;margin-left:2px;height:12px;line-height:12px;padding-left:1px;box-sizing:border-box}
 .b{height:13px;display:flex;align-items:center;border-top:1px solid #bbb;box-sizing:border-box;overflow:hidden}
 .b>*{flex:none;display:block}
 .tk{height:5px;background:linear-gradient(90deg,#20486e,#2a5f8e 30%,#1e4a72);display:flex}
 .tk i{display:block;flex:none}`,
 `<div class="a"><span>Балка - вид</span></div>
 <div class="b"><span style="margin-left:3px;width:95px">Код : EN 1992-1-1:2004 AC</span><span style="margin-left:5px;width:206px">Правило: EN 1990:2002</span>${S('<rect x="0" y="1" width="8" height="7" fill="#ddd" stroke="#333"/>',9,9)}<span style="margin-left:8px;width:56px">C30/37</span>${S('<path d="M1 2h6v6H1z" fill="#d33" stroke="#422"/>',9,9)}<span style="margin-left:4px;width:71px">B500C (Период.пј</span>${S('<path d="M0 4h7M5 2l3 2-3 2" stroke="#333" fill="none"/>',9,9)}<span style="margin-left:5px;width:71px">B500C (Период.пј</span>${S('<circle cx="4.5" cy="4.5" r="3.5" fill="#bbb" stroke="#555"/>',9,9)}<span style="margin-left:5px;width:70px">Результаты: нет</span></div>
 <div class="tk"><i style="width:10px"></i><i style="width:20px;background:radial-gradient(circle at 50% 100%,#9ce,#2b6a3a 60%,#1b3a5a)"></i><i style="width:12px"></i><i style="width:28px;background:linear-gradient(#8fb3c9,#5c8aa8);border-radius:2px 2px 0 0"></i></div>`);

def('rb-app',`:host{display:flex;flex-direction:column;width:1174px;height:721px;overflow:hidden;position:relative;filter:blur(.35px)}
 .w{display:flex;height:635px;flex:none}`,
 `<rb-logo></rb-logo><rb-titlebar></rb-titlebar><rb-menubar></rb-menubar><rb-toolbar></rb-toolbar>
 <div class="w"><rb-inspector></rb-inspector><rb-center></rb-center><rb-side></rb-side></div><rb-status></rb-status>`);
</script></body></html>
